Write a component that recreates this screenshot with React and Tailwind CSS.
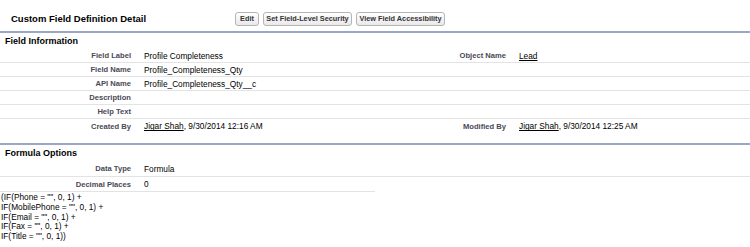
import React from 'react';

const font = { fontFamily: '"Liberation Sans", Arial, sans-serif' };

// left / right pairs for the first block
const infoRows = [
  { l: 'Field Label', v: 'Profile Completeness', rl: 'Object Name', rv: <a className="underline">Lead</a> },
  { l: 'Field Name', v: 'Profile_Completeness_Qty' },
  { l: 'API Name', v: 'Profile_Completeness_Qty__c' },
  { l: 'Description', v: '' },
  { l: 'Help Text', v: '' },
  {
    l: 'Created By',
    v: <><a className="underline">Jigar Shah</a>, 9/30/2014 12:16 AM</>,
    rl: 'Modified By',
    rv: <><a className="underline">Jigar Shah</a>, 9/30/2014 12:25 AM</>,
  },
];

const formula = [
  '(IF(Phone = "", 0, 1) +',
  'IF(MobilePhone = "", 0, 1) +',
  'IF(Email = "", 0, 1) +',
  'IF(Fax = "", 0, 1) +',
  'IF(Title = "", 0, 1))',
];

const Cell = ({ label, value, line = true, h = 'h-[14px]' }) => (
  <div className={`flex items-center pt-[1px] ${h} ${line ? 'border-b border-[#e3e3e3]' : ''}`}>
    <div className="w-[131px] shrink-0 text-right text-[7.6px] font-bold text-[#4a4a56] leading-none">{label}</div>
    <div className="pl-[13px] text-[8.3px] text-black leading-none whitespace-nowrap">{value}</div>
  </div>
);

const Button = ({ children, w }) => (
  <button
    type="button"
    className={`${w} h-[14px] flex items-center justify-center rounded-[3px] border border-[#b5b5b5] bg-gradient-to-b from-white to-[#e9e9e9] text-[7.3px] font-bold text-[#333] leading-none whitespace-nowrap`}
  >
    {children}
  </button>
);

const App = () => {
  return (
    <div className="w-[750px] h-[247px] bg-white overflow-hidden" style={font}>
      {/* --- PAGE BLOCK HEADER --- */}
      <div className="flex items-center h-[31px] pt-[7px]">
        <div className="w-[235px] shrink-0 pl-[11px] text-[9.5px] font-bold text-black leading-none">
          Custom Field Definition Detail
        </div>
        <div className="flex gap-[4px]">
          <Button w="w-[24px]">Edit</Button>
          <Button w="w-[89px]">Set Field-Level Security</Button>
          <Button w="w-[89px]">View Field Accessibility</Button>
        </div>
      </div>

      {/* --- FIELD INFORMATION --- */}
      <div className="border-t-2 border-[#9aa8c6]">
        <div className="h-[16px] flex items-center pl-[5px] text-[9px] font-bold text-black leading-none">
          Field Information
        </div>
        <div>
          {infoRows.map((r, i) => (
            <div key={i} className="grid grid-cols-2">
              <Cell label={r.l} value={r.v} line={i < infoRows.length - 1} />
              <Cell label={r.rl} value={r.rv} line={i < infoRows.length - 1} />
            </div>
          ))}
        </div>
      </div>

      {/* --- FORMULA OPTIONS --- */}
      <div className="mt-[10px] border-t-2 border-[#9aa8c6]">
        <div className="h-[16px] flex items-center pl-[5px] text-[9px] font-bold text-black leading-none">
          Formula Options
        </div>
        <div className="grid grid-cols-2">
          <Cell label="Data Type" value="Formula" h="h-[16px]" />
          <Cell label="" value="" h="h-[16px]" />
        </div>
        <div className="grid grid-cols-2">
          <Cell label="Decimal Places" value="0" h="h-[15px]" />
          <div />
        </div>
        <div className="pl-[1px] pt-[1px] text-[8.3px] leading-[9.8px] text-black">
          {formula.map((f, i) => (
            <div key={i}>{f}</div>
          ))}
        </div>
      </div>
    </div>
  );
};

export default App;
